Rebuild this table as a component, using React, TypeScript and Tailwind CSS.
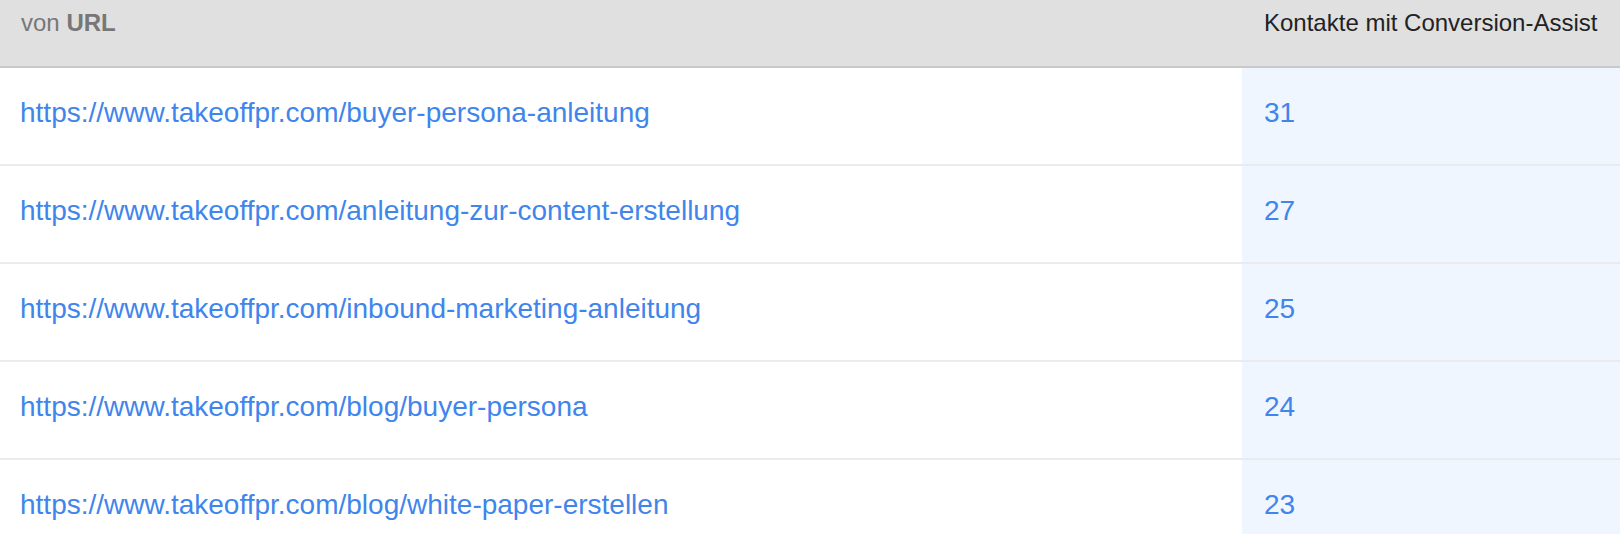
import React from 'react';

const rows = [
  { url: 'https://www.takeoffpr.com/buyer-persona-anleitung', count: 31 },
  { url: 'https://www.takeoffpr.com/anleitung-zur-content-erstellung', count: 27 },
  { url: 'https://www.takeoffpr.com/inbound-marketing-anleitung', count: 25 },
  { url: 'https://www.takeoffpr.com/blog/buyer-persona', count: 24 },
  { url: 'https://www.takeoffpr.com/blog/white-paper-erstellen', count: 23 },
];

const App: React.FC = () => {
  return (
    <div className="w-[1620px] h-[534px] overflow-hidden bg-white font-['Liberation_Sans',Arial,sans-serif]">
      <div className="grid grid-cols-[1242px_1fr] h-[68px] bg-[#e0e0e0] border-b-2 border-[#c9c9c9]">
        <div className="pl-[21px] pt-[5px] text-[24px] leading-normal text-[#777]">
          von <span className="font-bold">URL</span>
        </div>
        <div className="pl-[22px] pt-[5px] text-[24px] leading-normal text-[#222]">
          Kontakte mit Conversion-Assist
        </div>
      </div>
      {rows.map((row, i) => (
        <div
          key={row.url}
          className={`grid grid-cols-[1242px_1fr] ${i < rows.length - 1 ? 'h-[98px] border-b-2 border-[#ebebeb]' : 'h-[96px]'}`}
        >
          <div className="pl-[20px] pt-[24px] text-[28px] leading-normal text-[#3f85ec]">
            <a href="#">{row.url}</a>
          </div>
          <div className="bg-[#eff6ff] pl-[22px] pt-[24px] text-[28px] leading-normal text-[#3f85ec]">
            {row.count}
          </div>
        </div>
      ))}
    </div>
  );
};

export default App;
